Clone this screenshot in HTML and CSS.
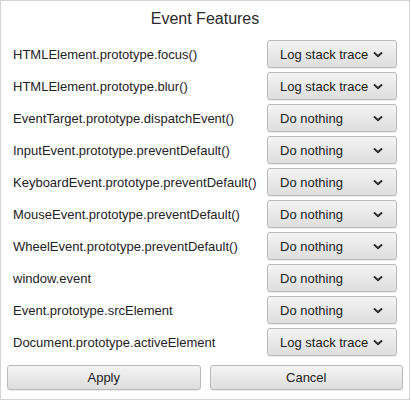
FILE: index.html
```html
<!DOCTYPE html>
<html>
<head>
<meta charset="utf-8">
<link rel="stylesheet" href="styles.css">
</head>
<body>
<div class="dialog">
  <h1 class="title">Event Features</h1>
  <div class="rows">
    <div class="row"><span class="label">HTMLElement.prototype.focus()</span><button class="select"><span>Log stack trace</span><svg class="chev" viewBox="0 0 10 7"><path d="M1 1.5 L5 5.2 L9 1.5"/></svg></button></div>
    <div class="row"><span class="label">HTMLElement.prototype.blur()</span><button class="select"><span>Log stack trace</span><svg class="chev" viewBox="0 0 10 7"><path d="M1 1.5 L5 5.2 L9 1.5"/></svg></button></div>
    <div class="row"><span class="label">EventTarget.prototype.dispatchEvent()</span><button class="select"><span>Do nothing</span><svg class="chev" viewBox="0 0 10 7"><path d="M1 1.5 L5 5.2 L9 1.5"/></svg></button></div>
    <div class="row"><span class="label">InputEvent.prototype.preventDefault()</span><button class="select"><span>Do nothing</span><svg class="chev" viewBox="0 0 10 7"><path d="M1 1.5 L5 5.2 L9 1.5"/></svg></button></div>
    <div class="row"><span class="label">KeyboardEvent.prototype.preventDefault()</span><button class="select"><span>Do nothing</span><svg class="chev" viewBox="0 0 10 7"><path d="M1 1.5 L5 5.2 L9 1.5"/></svg></button></div>
    <div class="row"><span class="label">MouseEvent.prototype.preventDefault()</span><button class="select"><span>Do nothing</span><svg class="chev" viewBox="0 0 10 7"><path d="M1 1.5 L5 5.2 L9 1.5"/></svg></button></div>
    <div class="row"><span class="label">WheelEvent.prototype.preventDefault()</span><button class="select"><span>Do nothing</span><svg class="chev" viewBox="0 0 10 7"><path d="M1 1.5 L5 5.2 L9 1.5"/></svg></button></div>
    <div class="row"><span class="label">window.event</span><button class="select"><span>Do nothing</span><svg class="chev" viewBox="0 0 10 7"><path d="M1 1.5 L5 5.2 L9 1.5"/></svg></button></div>
    <div class="row"><span class="label">Event.prototype.srcElement</span><button class="select"><span>Do nothing</span><svg class="chev" viewBox="0 0 10 7"><path d="M1 1.5 L5 5.2 L9 1.5"/></svg></button></div>
    <div class="row"><span class="label">Document.prototype.activeElement</span><button class="select"><span>Log stack trace</span><svg class="chev" viewBox="0 0 10 7"><path d="M1 1.5 L5 5.2 L9 1.5"/></svg></button></div>
  </div>
  <div class="actions">
    <button class="btn">Apply</button>
    <button class="btn">Cancel</button>
  </div>
</div>
</body>
</html>
```

FILE: styles.css
```css
html, body {
  margin: 0;
  padding: 0;
  background: #fff;
}
body {
  font-family: "Liberation Sans", Arial, sans-serif;
  color: #222;
}
.dialog {
  box-sizing: border-box;
  width: 410px;
  height: 400px;
  border: 1px solid #d4d4d4;
  display: flex;
  flex-direction: column;
}
.title {
  margin: 0;
  height: 39px;
  font-size: 16px;
  font-weight: normal;
  text-align: center;
  line-height: 35px;
  color: #2a2a2a;
}
.rows {
  display: flex;
  flex-direction: column;
  gap: 4px;
}
.row {
  display: flex;
  align-items: center;
  justify-content: space-between;
  height: 28px;
  padding: 0 12px 0 12px;
}
.label {
  font-size: 13px;
  color: #222;
}
button {
  font-family: "Liberation Sans", Arial, sans-serif;
  font-size: 13px;
  color: #222;
  margin: 0;
}
.select {
  box-sizing: border-box;
  width: 130px;
  height: 28px;
  display: flex;
  align-items: center;
  justify-content: space-between;
  padding: 0 12px 0 12px;
  border: 1px solid #b9b9b9;
  border-radius: 3px;
  background: linear-gradient(#f4f4f4, #dedede);
  box-shadow: 0 1px 0 rgba(0,0,0,0.08);
}
.chev {
  width: 10px;
  height: 7px;
  margin-right: 1px;
}
.chev path {
  fill: none;
  stroke: #2a2a2a;
  stroke-width: 2;
}
.actions {
  display: flex;
  gap: 9px;
  padding: 9px 6px 0 6px;
}
.btn {
  flex: 1;
  height: 25px;
  border: 1px solid #b9b9b9;
  border-radius: 3px;
  background: linear-gradient(#f4f4f4, #dedede);
  box-shadow: 0 1px 0 rgba(0,0,0,0.08);
  padding: 0;
}
```
